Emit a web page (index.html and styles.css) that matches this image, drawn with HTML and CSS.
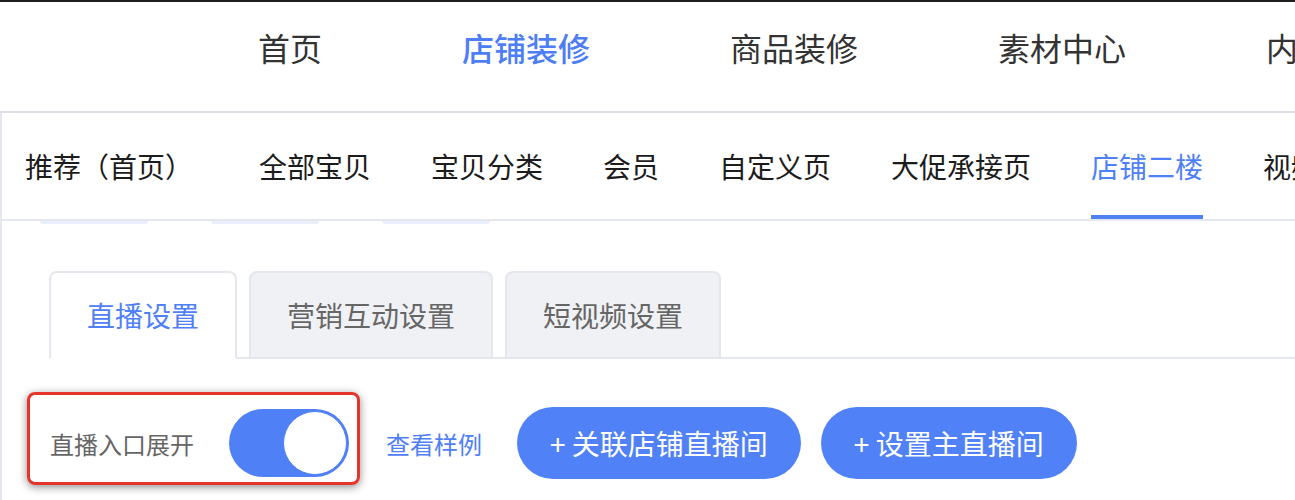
FILE: index.html
```html
<!DOCTYPE html>
<html lang="zh-CN">

<head>
    <meta charset="UTF-8">
    <meta name="viewport" content="width=device-width, initial-scale=1.0">
    <title>店铺装修</title>
    <link rel="stylesheet" href="styles.css">
</head>

<body>
    <header class="main-nav">
        <a class="main-nav__item">首页</a>
        <a class="main-nav__item active">店铺装修</a>
        <a class="main-nav__item">商品装修</a>
        <a class="main-nav__item">素材中心</a>
        <a class="main-nav__item">内容中心</a>
    </header>

    <section class="panel">
        <nav class="sub-nav">
            <a class="sub-nav__item first">推荐（首页）</a>
            <a class="sub-nav__item">全部宝贝</a>
            <a class="sub-nav__item">宝贝分类</a>
            <a class="sub-nav__item">会员</a>
            <a class="sub-nav__item">自定义页</a>
            <a class="sub-nav__item">大促承接页</a>
            <a class="sub-nav__item active">店铺二楼</a>
            <a class="sub-nav__item">视频</a>
        </nav>

        <div class="ghost-row">
            <span></span>
            <span></span>
            <span></span>
        </div>

        <div class="tabs">
            <div class="tab active">直播设置</div>
            <div class="tab">营销互动设置</div>
            <div class="tab">短视频设置</div>
        </div>

        <div class="live-row">
            <div class="highlight">
                <span class="label">直播入口展开</span>
                <span class="switch"><span class="switch__knob"></span></span>
            </div>
            <a class="link">查看样例</a>
            <button class="btn">+ 关联店铺直播间</button>
            <button class="btn">+ 设置主直播间</button>
        </div>
    </section>
</body>

</html>
```

FILE: styles.css
```css
body {
    margin: 0;
    background: #ffffff;
    font-family: "Noto Sans CJK SC", "Noto Sans", sans-serif;
    overflow: hidden;
}

a {
    text-decoration: none;
    cursor: pointer;
}

/* top navigation */
.main-nav {
    display: flex;
    gap: 140px;
    padding: 21px 0 40px 258px;
    border-top: 2px solid #1f1f1f;
    border-bottom: 2px solid #dcdfe6;
    white-space: nowrap;
    overflow: hidden;
}

.main-nav__item {
    font-size: 32px;
    line-height: 48px;
    color: #333333;
}

.main-nav__item.active {
    color: #4d7ef5;
    font-weight: 500;
}

/* page panel */
.panel {
    border-left: 2px solid #e4e7ed;
    height: 400px;
}

.sub-nav {
    display: flex;
    gap: 60px;
    height: 106px;
    padding-left: 23px;
    border-bottom: 2px solid #e4e7ed;
    white-space: nowrap;
    overflow: hidden;
}

.sub-nav__item {
    display: flex;
    align-items: center;
    font-size: 28px;
    color: #1c1c1c;
}

.sub-nav__item.first {
    margin-right: 6px;
}

.sub-nav__item.active {
    color: #4f80f6;
    box-shadow: inset 0 -4px 0 #4f80f6;
}

.ghost-row {
    display: flex;
    gap: 63px;
    margin-left: 38px;
}

.ghost-row span {
    width: 108px;
    height: 3px;
    border-radius: 0 0 4px 4px;
    background: #e8effb;
}

/* card tabs */
.tabs {
    display: flex;
    gap: 12px;
    margin: 47px 0 0 47px;
    border-bottom: 2px solid #e4e7ed;
}

.tab {
    box-sizing: border-box;
    height: 88px;
    padding: 0 36px;
    margin-bottom: -2px;
    display: flex;
    align-items: center;
    font-size: 28px;
    color: #666666;
    background: #f0f1f5;
    border: 2px solid #e4e7ed;
    border-radius: 8px 8px 0 0;
}

.tab.active {
    color: #4f80f6;
    background: #ffffff;
    border-bottom-color: #ffffff;
}

/* live settings row */
.live-row {
    display: flex;
    align-items: center;
    margin: 33px 0 0 25px;
}

.highlight {
    display: flex;
    align-items: center;
    gap: 35px;
    padding: 14px 8px 5px 20px;
    margin-bottom: 9px;
    border: 3px solid #e5352b;
    border-radius: 8px;
    box-shadow: rgba(0, 0, 0, 0.45) 0px 2px 8px;
}

.label {
    font-size: 24px;
    color: #666666;
}

.switch {
    box-sizing: border-box;
    width: 120px;
    height: 68px;
    padding: 2px;
    display: flex;
    justify-content: flex-end;
    border-radius: 34px;
    background: #4f80f6;
}

.switch__knob {
    box-sizing: border-box;
    width: 64px;
    height: 64px;
    border-radius: 50%;
    background: #ffffff;
    border: 1px solid #4f80f6;
}

.link {
    margin-left: 26px;
    font-size: 24px;
    color: #4f80f6;
}

.btn {
    height: 72px;
    padding: 0 33px;
    margin-left: 20px;
    border: none;
    border-radius: 36px;
    background: #5081f7;
    color: #ffffff;
    font-family: inherit;
    font-size: 28px;
}

.link + .btn {
    margin-left: 35px;
}
```
